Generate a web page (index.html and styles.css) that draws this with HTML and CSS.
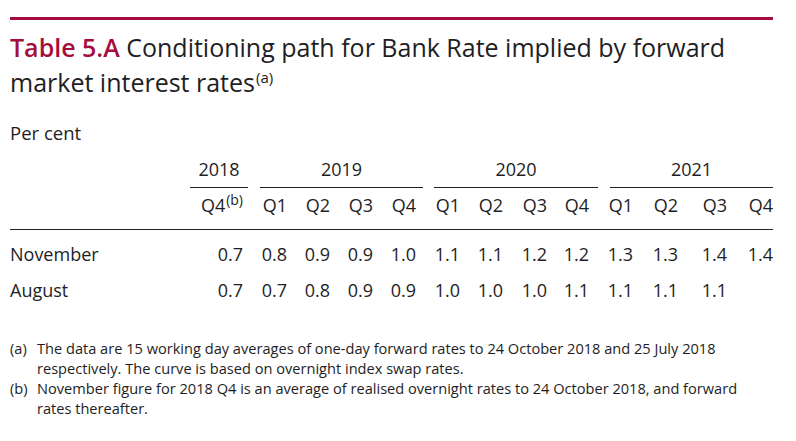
FILE: index.html
```html
<!DOCTYPE html>
<html>
<head>
<meta charset="utf-8">
<link rel="stylesheet" href="styles.css">
</head>
<body>
<div class="page">
  <div class="rule-top"></div>
  <h1 class="title"><span class="tag">Table 5.A</span> <span>Conditioning path for Bank Rate implied by forward</span><br><span>market interest rates</span><sup class="note">(a)</sup></h1>
  <div class="unit">Per cent</div>
  <div class="grid">
    <div class="lab"></div>
    <div class="yr y18">2018</div>
    <div class="yr y19">2019</div>
    <div class="yr y20">2020</div>
    <div class="yr y21">2021</div>

    <div class="lab"></div>
    <div class="q">Q4<sup class="qs">(b)</sup></div>
    <div class="q">Q1</div><div class="q">Q2</div><div class="q">Q3</div><div class="q">Q4</div>
    <div class="q">Q1</div><div class="q">Q2</div><div class="q">Q3</div><div class="q">Q4</div>
    <div class="q">Q1</div><div class="q">Q2</div><div class="q">Q3</div><div class="q">Q4</div>

    <div class="hr"></div>

    <div class="lab row1">November</div>
    <div class="v row1">0.7</div><div class="v row1">0.8</div><div class="v row1">0.9</div><div class="v row1">0.9</div>
    <div class="v row1">1.0</div><div class="v row1">1.1</div><div class="v row1">1.1</div><div class="v row1">1.2</div>
    <div class="v row1">1.2</div><div class="v row1">1.3</div><div class="v row1">1.3</div><div class="v row1">1.4</div>
    <div class="v row1">1.4</div>

    <div class="lab">August</div>
    <div class="v">0.7</div><div class="v">0.7</div><div class="v">0.8</div><div class="v">0.9</div>
    <div class="v">0.9</div><div class="v">1.0</div><div class="v">1.0</div><div class="v">1.0</div>
    <div class="v">1.1</div><div class="v">1.1</div><div class="v">1.1</div><div class="v">1.1</div>
    <div class="v"></div>
  </div>
  <div class="notes">
    <div class="fn"><span class="fl">(a)</span><span class="ft">The data are 15 working day averages of one-day forward rates to 24 October 2018 and 25 July 2018<br>respectively. The curve is based on overnight index swap rates.</span></div>
    <div class="fn"><span class="fl">(b)</span><span class="ft">November figure for 2018 Q4 is an average of realised overnight rates to 24 October 2018, and forward<br>rates thereafter.</span></div>
  </div>
</div>
</body>
</html>
```

FILE: styles.css
```css
html, body {
  margin: 0;
  padding: 0;
  background: #ffffff;
}
body {
  font-family: "Open Sans", "Noto Sans", "Liberation Sans", sans-serif;
  color: #1e1e24;
}
.page {
  width: 763px;
  padding-left: 10px;
  padding-top: 17px;
}
.rule-top {
  height: 3px;
  background: #a50d3c;
}
.title {
  margin: 10px 0 0 0;
  font-size: 25px;
  line-height: 35px;
  font-weight: 400;
  width: 740px;
}
.tag {
  color: #a50d3c;
  font-weight: 600;
}
.note {
  font-size: 15px;
  vertical-align: super;
  line-height: 1;
  margin-left: 1px;
}
.unit {
  margin-top: 21px;
  font-size: 18.5px;
  line-height: 24px;
}
.grid {
  margin-top: 12px;
  display: grid;
  grid-template-columns: 180px 53px 44px 43px 43px 43px 44px 43px 44px 42px 44px 45px 49px 46px;
  font-size: 18px;
}
.yr {
  text-align: center;
  line-height: 24px;
  padding-bottom: 6px;
  border-bottom: 1.5px solid #222;
}
.y18 { grid-column: 2 / 3; margin-right: -5px; }
.y19 { grid-column: 3 / 7; margin-left: 17px; margin-right: -7px; }
.y20 { grid-column: 7 / 11; margin-left: 18px; margin-right: -9px; }
.y21 { grid-column: 11 / 15; margin-left: 21px; }
.q {
  text-align: right;
  line-height: 24px;
  padding-top: 5px;
  padding-bottom: 12px;
}
.q:last-child { padding-right: 1px; }
.qs {
  font-size: 14px;
  vertical-align: super;
  line-height: 1;
  margin-left: 1px;
}
.hr {
  grid-column: 1 / -1;
  border-top: 1.5px solid #222;
}
.lab {
  line-height: 24px;
}
.v {
  text-align: right;
  line-height: 24px;
}
.row1 {
  padding-top: 12px;
  padding-bottom: 12px;
}
.notes {
  margin-top: 36px;
  font-size: 14.6px;
  line-height: 20px;
}
.fn {
  display: flex;
}
.fl {
  width: 27px;
  flex: none;
}
```
